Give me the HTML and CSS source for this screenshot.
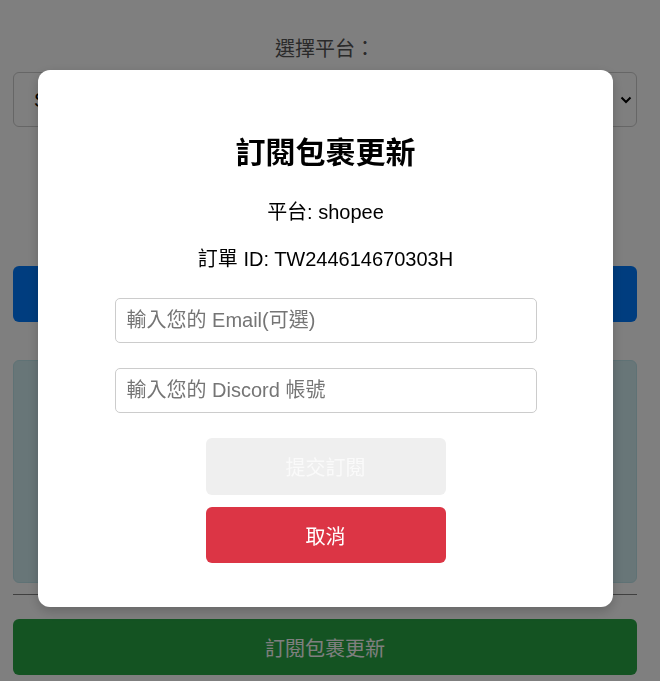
FILE: index.html
```html
<!DOCTYPE html>
<html lang="zh-Hant">
<head>
<meta charset="utf-8">
<title>訂閱包裹更新</title>
<link rel="stylesheet" href="styles.css">
</head>
<body>
<div class="page">
  <label class="field-label" for="platform">選擇平台：</label>
  <select id="platform" class="select">
    <option>Shopee</option>
  </select>
  <button class="btn btn-blue">查詢包裹</button>
  <div class="info-box"></div>
  <hr class="divider">
  <button class="btn btn-green">訂閱包裹更新</button>
</div>

<div class="overlay">
  <div class="modal">
    <h2 class="modal-title">訂閱包裹更新</h2>
    <p class="modal-line first">平台: shopee</p>
    <p class="modal-line">訂單 ID: TW244614670303H</p>
    <input class="text-input first-input" type="text" placeholder="輸入您的 Email(可選)">
    <input class="text-input" type="text" placeholder="輸入您的 Discord 帳號">
    <button class="modal-btn submit" disabled>提交訂閱</button>
    <button class="modal-btn cancel">取消</button>
  </div>
</div>
</body>
</html>
```
FILE: styles.css
```css
* { box-sizing: border-box; }
html, body { margin: 0; padding: 0; }
body {
  font-family: "Liberation Sans", "Noto Sans CJK TC", sans-serif;
  font-size: 20px;
  color: #000;
  background: #fff;
}
.page {
  width: 624px;
  margin-left: 13px;
  padding-top: 37px;
  display: flex;
  flex-direction: column;
}
.field-label {
  display: block;
  text-align: center;
  line-height: 24px;
  color: #555;
}
.select {
  margin-top: 11px;
  height: 55px;
  width: 100%;
  font: inherit;
  color: #000;
  border: 1px solid #ccc;
  border-radius: 6px;
  padding: 0 30px 0 20px;
  -webkit-appearance: none;
  appearance: none;
  background: #fff url("data:image/svg+xml;utf8,<svg xmlns='http://www.w3.org/2000/svg' width='12' height='8' viewBox='0 0 12 8'><path d='M1.5 1.5 L6 6 L10.5 1.5' fill='none' stroke='%23000' stroke-width='2'/></svg>") no-repeat right 4px center;
}
.btn {
  height: 56px;
  width: 100%;
  border: none;
  border-radius: 6px;
  font: inherit;
  color: #fff;
}
.btn-blue {
  margin-top: 139px;
  background: #007bff;
}
.info-box {
  margin-top: 38px;
  height: 223px;
  background: #d1ecf1;
  border: 1px solid #bee5eb;
  border-radius: 6px;
}
.divider {
  margin: 11px 0 0;
  border: none;
  border-top: 1px solid #808080;
  height: 0;
}
.btn-green {
  margin-top: 24px;
  background: #28a745;
}
.overlay {
  position: fixed;
  inset: 0;
  background: rgba(0, 0, 0, 0.5);
  display: flex;
  justify-content: center;
  align-items: flex-start;
  padding-top: 70px;
  padding-right: 9px;
}
.modal {
  width: 575px;
  background: #fff;
  border-radius: 12px;
  padding: 44px 0;
  display: flex;
  flex-direction: column;
  align-items: center;
  box-shadow: 0 4px 12px rgba(0, 0, 0, 0.2);
}
.modal-title {
  margin: 21px 0 0;
  font-size: 30px;
  line-height: 36px;
  font-weight: bold;
  color: #000;
}
.modal-line {
  margin: 23px 0 0;
  line-height: 24px;
  color: #000;
}
.modal-line.first { margin-top: 29px; }
.text-input {
  margin-top: 25px;
  width: 422px;
  height: 45px;
  border: 1px solid #ccc;
  border-radius: 5px;
  padding: 0 11px;
  font: inherit;
  color: #000;
  outline: none;
}
.text-input.first-input { margin-top: 27px; }
.text-input::placeholder { color: #757575; }
.modal-btn {
  width: 240px;
  border: none;
  border-radius: 6px;
  font: inherit;
  color: #fff;
}
.submit {
  margin-top: 25px;
  height: 57px;
  background: #efefef;
  color: #fafafa;
}
.cancel {
  margin-top: 12px;
  height: 56px;
  background: #dc3545;
}
```
